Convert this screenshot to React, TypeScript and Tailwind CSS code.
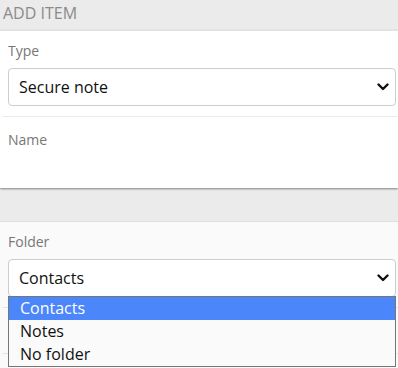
import React from "react";

function Chevron() {
  return (
    <svg width="12" height="8" viewBox="0 0 12 8" className="shrink-0">
      <polyline
        points="1.5,1.5 6,6 10.5,1.5"
        fill="none"
        stroke="#111"
        strokeWidth="2.4"
        strokeLinecap="round"
        strokeLinejoin="round"
      />
    </svg>
  );
}

function SelectBox({ value }: { value: string }) {
  return (
    <div className="ml-2 mr-[2px] flex h-[38px] items-center justify-between rounded-[4px] border border-[#cdcdcd] bg-white pl-[10px] pr-[6px] text-[16px] text-[#111]">
      <span>{value}</span>
      <Chevron />
    </div>
  );
}

const folders = ["Contacts", "Notes", "No folder"];

export default function App() {
  return (
    <div className="relative h-[368px] w-[398px] overflow-hidden bg-[#ebebeb] font-['Open_Sans',sans-serif]">
      <div className="h-[30px] px-[3px] pt-[1px] text-[16px] leading-[24px] text-[#8a8a8a] uppercase">
        Add item
      </div>
      <div className="border-t border-[#e2e2e2] bg-white shadow-[0_1px_2px_rgba(0,0,0,0.45)]">
        <div className="pt-[10px] pb-[10px]">
          <label className="block px-2 text-[14px] leading-[20px] text-[#777]">
            Type
          </label>
          <div className="mt-[7px]">
            <SelectBox value="Secure note" />
          </div>
        </div>
        <div className="ml-[2px] h-px bg-[#ececec]" />
        <div className="h-[71px] pt-[13px]">
          <label className="block px-2 text-[14px] leading-[20px] text-[#777]">
            Name
          </label>
        </div>
      </div>
      <div className="h-[33px]" />
      <div className="h-[200px] border-t border-[#e0e0e0] bg-[#fafafa]">
        <div className="pt-[10px] pb-[10px]">
          <label className="block px-2 text-[14px] leading-[20px] text-[#777]">
            Folder
          </label>
          <div className="mt-[7px]">
            <SelectBox value="Contacts" />
          </div>
        </div>
        <div className="ml-[2px] h-px bg-[#e6e6e6]" />
        <div className="h-[45px]" />
        <div className="ml-[2px] h-px bg-[#e6e6e6]" />
      </div>
      <ul className="absolute top-[296px] left-2 w-[388px] border border-[#767676] bg-[#fafafa] text-[16px] leading-[23px] text-[#111]">
        {folders.map((f, i) => (
          <li
            key={f}
            className={
              i === 0 ? "bg-[#4b86fa] pl-[11px] text-white" : "pl-[11px]"
            }
          >
            {f}
          </li>
        ))}
      </ul>
    </div>
  );
}
